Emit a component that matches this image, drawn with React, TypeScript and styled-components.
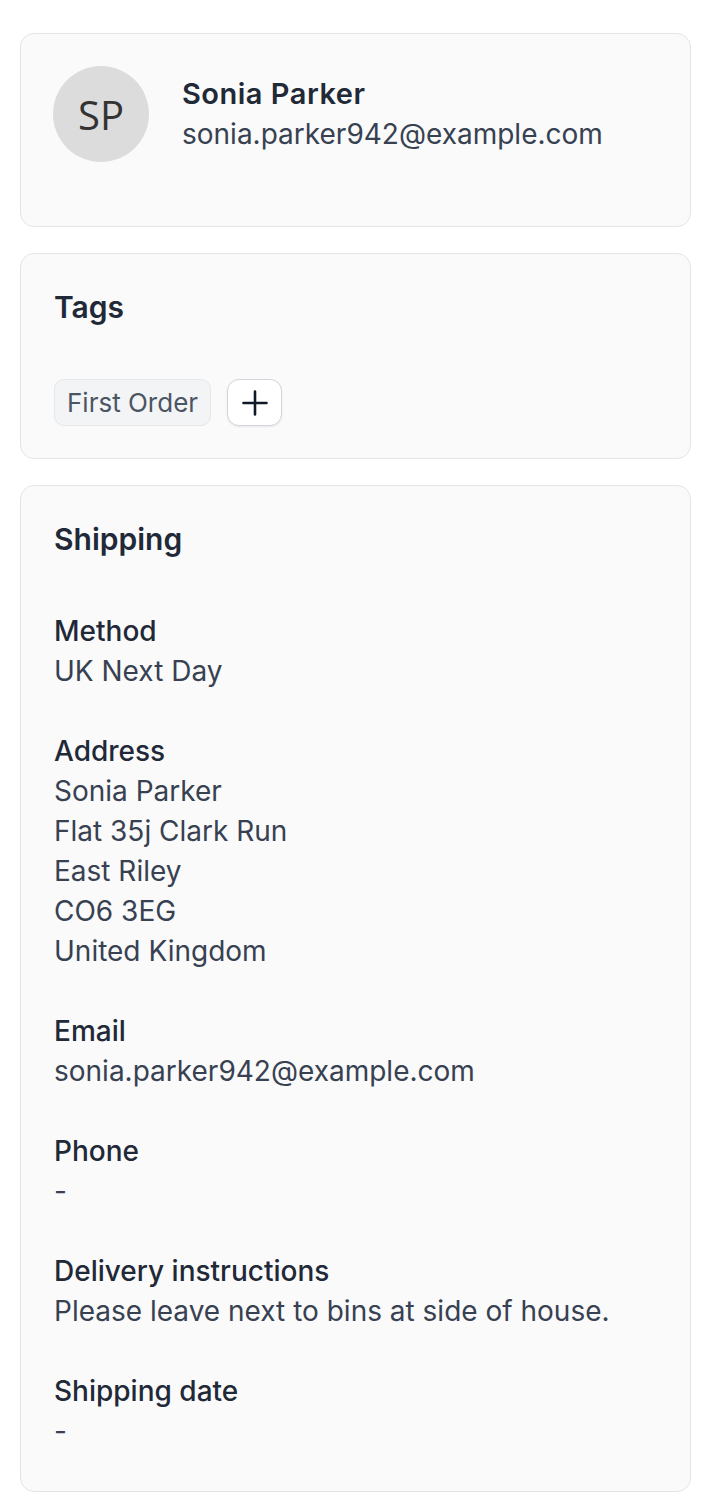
import React from 'react';
import styled, { createGlobalStyle } from 'styled-components';

const GlobalStyle = createGlobalStyle`
  * { box-sizing: border-box; }
  body {
    margin: 0;
    background: #ffffff;
    font-family: Inter, "Noto Sans", sans-serif;
    -webkit-font-smoothing: antialiased;
  }
`;

const Page = styled.main`
  display: flex;
  flex-direction: column;
  gap: 26px;
  padding: 33px 19px 20px 20px;
`;

const Card = styled.section<{ $bottom?: number; $left?: number }>`
  background: #fafafa;
  border: 1px solid #e4e4e7;
  border-radius: 14px;
  padding: 32px 32px ${(p) => p.$bottom ?? 32}px ${(p) => p.$left ?? 33}px;
`;

const ProfileRow = styled.div`
  display: flex;
  align-items: center;
  gap: 33px;
`;

const Avatar = styled.div`
  width: 96px;
  height: 96px;
  border-radius: 50%;
  background: #dcdcdc;
  color: #333333;
  display: flex;
  align-items: center;
  justify-content: center;
  font-family: "Open Sans", sans-serif;
  font-size: 40px;
  flex-shrink: 0;
`;

const ProfileText = styled.div`
  display: flex;
  flex-direction: column;
`;

const Name = styled.div`
  font-size: 29px;
  line-height: 40px;
  font-weight: 600;
  letter-spacing: 0.5px;
  color: #1f2937;
`;

const Email = styled.div`
  font-size: 28px;
  line-height: 40px;
  color: #374151;
`;

const Title = styled.h2`
  margin: 0 0 51px;
  font-size: 30px;
  line-height: 42px;
  font-weight: 600;
  color: #1f2937;
`;

const TagRow = styled.div`
  display: flex;
  align-items: center;
  gap: 16px;
`;

const Tag = styled.span`
  display: inline-flex;
  align-items: center;
  height: 47px;
  padding: 0 12px;
  background: #f3f4f6;
  border: 1px solid #e5e7eb;
  border-radius: 10px;
  font-size: 26px;
  color: #4b5563;
`;

const AddButton = styled.button`
  display: inline-flex;
  align-items: center;
  justify-content: center;
  width: 55px;
  height: 47px;
  padding: 0;
  background: #ffffff;
  border: 1.5px solid #d1d5db;
  border-radius: 12px;
  box-shadow: 0 1px 2px rgb(0 0 0 / 8%);
  color: #111827;
  cursor: pointer;
`;

const FieldList = styled.div`
  display: flex;
  flex-direction: column;
  gap: 40px;
`;

const Field = styled.div`
  display: flex;
  flex-direction: column;
`;

const Label = styled.div`
  font-size: 28px;
  line-height: 40px;
  font-weight: 500;
  color: #1f2937;
`;

const Value = styled.div`
  font-size: 28px;
  line-height: 40px;
  color: #374151;
`;

const PlusIcon = () => (
  <svg width="26" height="26" viewBox="0 0 26 26" fill="none" stroke="currentColor" strokeWidth="2.6" strokeLinecap="round">
    <path d="M13 1.5v23M1.5 13h23" />
  </svg>
);

const fields: { label: string; lines: string[] }[] = [
  { label: 'Method', lines: ['UK Next Day'] },
  {
    label: 'Address',
    lines: ['Sonia Parker', 'Flat 35j Clark Run', 'East Riley', 'CO6 3EG', 'United Kingdom'],
  },
  { label: 'Email', lines: ['sonia.parker942@example.com'] },
  { label: 'Phone', lines: ['-'] },
  { label: 'Delivery instructions', lines: ['Please leave next to bins at side of house.'] },
  { label: 'Shipping date', lines: ['-'] },
];

export default function App() {
  return (
    <>
      <GlobalStyle />
      <Page>
        <Card $bottom={64} $left={32}>
          <ProfileRow>
            <Avatar>SP</Avatar>
            <ProfileText>
              <Name>Sonia Parker</Name>
              <Email>sonia.parker942@example.com</Email>
            </ProfileText>
          </ProfileRow>
        </Card>

        <Card>
          <Title>Tags</Title>
          <TagRow>
            <Tag>First Order</Tag>
            <AddButton aria-label="Add tag">
              <PlusIcon />
            </AddButton>
          </TagRow>
        </Card>

        <Card $bottom={40}>
          <Title>Shipping</Title>
          <FieldList>
            {fields.map((f) => (
              <Field key={f.label}>
                <Label>{f.label}</Label>
                {f.lines.map((line, i) => (
                  <Value key={i}>{line}</Value>
                ))}
              </Field>
            ))}
          </FieldList>
        </Card>
      </Page>
    </>
  );
}
